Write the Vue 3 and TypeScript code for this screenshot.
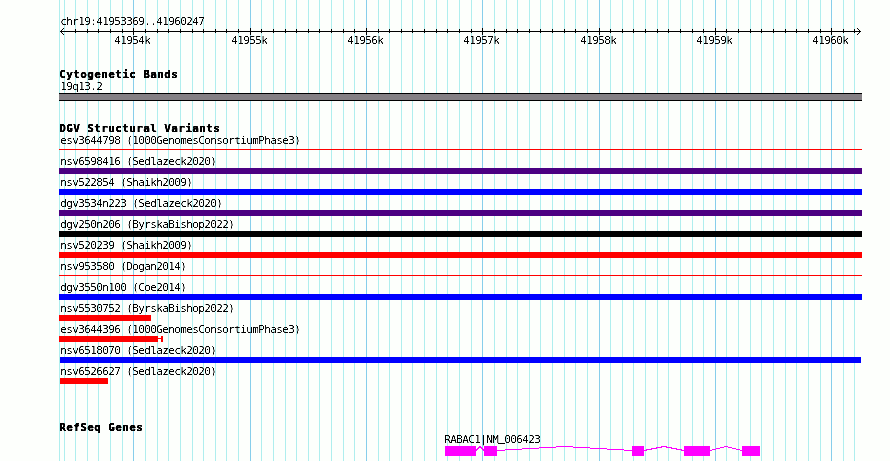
<script setup lang="ts">
interface Variant {
  name: string
  study: string
  color: string
  start: number
  end: number
  thin?: boolean
  tail?: number
}

const REGION_START = 41953369
const REGION_END = 41960247
const PLOT_LEFT = 60
const PLOT_WIDTH = 800

const toX = (pos: number): number =>
  Math.round(PLOT_LEFT + ((pos - REGION_START) * PLOT_WIDTH) / (REGION_END - REGION_START + 1))

const ticks: { x: number; major: boolean; label: string }[] = []
for (let pos = 41953400; pos <= REGION_END; pos += 100) {
  ticks.push({ x: toX(pos), major: pos % 1000 === 0, label: `${Math.floor(pos / 1000)}k` })
}
const majorTicks = ticks.filter((t) => t.major)

const RED = '#ff0000'
const BLUE = '#0000ff'
const PURPLE = '#4b0082'

const variants: Variant[] = [
  { name: 'esv3644798', study: '1000GenomesConsortiumPhase3', color: RED, start: 59, end: 862, thin: true },
  { name: 'nsv6598416', study: 'Sedlazeck2020', color: PURPLE, start: 59, end: 862 },
  { name: 'nsv522854', study: 'Shaikh2009', color: BLUE, start: 59, end: 862 },
  { name: 'dgv3534n223', study: 'Sedlazeck2020', color: PURPLE, start: 59, end: 862 },
  { name: 'dgv250n206', study: 'ByrskaBishop2022', color: '#000000', start: 59, end: 862 },
  { name: 'nsv520239', study: 'Shaikh2009', color: RED, start: 59, end: 862 },
  { name: 'nsv953580', study: 'Dogan2014', color: RED, start: 59, end: 862, thin: true },
  { name: 'dgv3550n100', study: 'Coe2014', color: BLUE, start: 59, end: 862 },
  { name: 'nsv5530752', study: 'ByrskaBishop2022', color: RED, start: 59, end: 151 },
  { name: 'esv3644396', study: '1000GenomesConsortiumPhase3', color: RED, start: 59, end: 158, tail: 163 },
  { name: 'nsv6518070', study: 'Sedlazeck2020', color: BLUE, start: 60, end: 861 },
  { name: 'nsv6526627', study: 'Sedlazeck2020', color: RED, start: 60, end: 108 },
]

const exons: [number, number][] = [
  [445, 476],
  [484, 497],
  [632, 644],
  [684, 710],
  [742, 760],
]
const introns = exons.slice(1).map(([next], i) => {
  const prev = exons[i][1]
  return `${prev},4.5 ${(prev + next) / 2},0.5 ${next},4.5`
})
</script>

<template>
  <main class="browser">
    <svg class="grid" width="890" height="461" shape-rendering="crispEdges">
      <defs>
        <filter id="crisp" x="0" y="0" width="1" height="1" color-interpolation-filters="sRGB">
          <feComponentTransfer>
            <feFuncA type="linear" slope="2.6" intercept="-0.85" />
          </feComponentTransfer>
        </filter>
      </defs>
      <rect class="minor" x="59" y="0" width="1" height="461" />
      <rect
        v-for="t in ticks"
        :key="t.x"
        :class="t.major ? 'major' : 'minor'"
        :x="t.x"
        y="0"
        width="1"
        height="461"
      />
    </svg>

    <header class="ruler">
      <div class="label">chr19:41953369..41960247</div>
      <svg class="axis" width="890" height="20" shape-rendering="crispEdges">
        <rect x="60" y="3" width="801" height="1" />
        <rect
          v-for="t in ticks.slice(1)"
          :key="t.x"
          :x="t.x"
          :y="t.major ? 0 : 1"
          width="1"
          :height="t.major ? 7 : 4"
        />
        <path d="M63 0h1v1h-1zM62 1h1v1h-1zM61 2h1v1h-1zM61 4h1v1h-1zM62 5h1v1h-1zM63 6h1v1h-1z" />
        <path d="M857 0h1v1h-1zM858 1h1v1h-1zM859 2h1v1h-1zM859 4h1v1h-1zM858 5h1v1h-1zM857 6h1v1h-1z" />
        <g class="tick-labels">
          <text v-for="t in majorTicks" :key="t.x" :x="t.x - 18.7" y="16">{{ t.label }}</text>
        </g>
      </svg>
    </header>

    <section class="track cytobands">
      <h2>Cytogenetic Bands</h2>
      <div class="label">19q13.2</div>
      <div class="band"></div>
    </section>

    <section class="track variants">
      <h2>DGV Structural Variants</h2>
      <div v-for="v in variants" :key="v.name" class="variant">
        <div class="label">{{ v.name }} ({{ v.study }})</div>
        <svg class="glyph" width="890" height="6" shape-rendering="crispEdges" :fill="v.color">
          <rect :x="v.start" :y="v.thin ? 2 : 0" :width="v.end - v.start" :height="v.thin ? 1 : 6" />
          <template v-if="v.tail">
            <rect :x="v.end" y="2" :width="v.tail - v.end" height="1" />
            <rect :x="v.tail - 2" y="0" width="2" height="6" />
          </template>
        </svg>
      </div>
    </section>

    <section class="track genes">
      <h2>RefSeq Genes</h2>
      <div class="label gene-name">RABAC1|NM<span class="underscore">_</span>006423</div>
      <svg class="glyph gene" width="890" height="10" shape-rendering="crispEdges">
        <polyline v-for="p in introns" :key="p" :points="p" />
        <rect v-for="[a, b] in exons" :key="a" :x="a" y="0" :width="b - a" height="10" />
      </svg>
    </section>
  </main>
</template>

<style>
body {
  background: #fdfffc;
}
</style>

<style scoped>
.browser {
  position: relative;
  width: 890px;
  height: 461px;
  overflow: hidden;
  background: #fdfffc;
  color: #000;
  font: 11px/13px 'DejaVu Sans Mono', 'Liberation Mono', monospace;
  letter-spacing: -0.623px;
}
.grid {
  position: absolute;
  inset: 0;
}
.minor {
  fill: #afeeee;
}
.major {
  fill: #87ceeb;
}
svg {
  display: block;
}
.ruler,
.track {
  position: relative;
}
.ruler {
  padding-top: 15px;
}
.axis {
  overflow: visible;
}
.tick-labels,
.label,
h2 {
  filter: url(#crisp);
}
.label {
  height: 13px;
  padding-left: 60.3px;
  white-space: pre;
}
h2 {
  margin: 0;
  height: 12px;
  padding-left: 59.2px;
  font-size: 11px;
  line-height: 13px;
  font-weight: 700;
  letter-spacing: 0.377px;
  -webkit-text-stroke: 0.35px #000;
}
.cytobands {
  margin-top: 20px;
}
.band {
  width: 803px;
  height: 8px;
  margin-left: 59px;
  box-sizing: border-box;
  background: #848084;
  border: solid #000;
  border-width: 1px 0;
}
.variants {
  margin-top: 21px;
}
.variant {
  height: 21px;
}
.genes {
  margin-top: 35px;
}
.gene-name {
  padding-left: 444.3px;
}
.underscore {
  line-height: 0;
  vertical-align: 2px;
  -webkit-text-stroke: 0.7px #000;
}
.gene rect {
  fill: #ff00ff;
}
.gene polyline {
  fill: none;
  stroke: #ff00ff;
  stroke-width: 1;
}
</style>
